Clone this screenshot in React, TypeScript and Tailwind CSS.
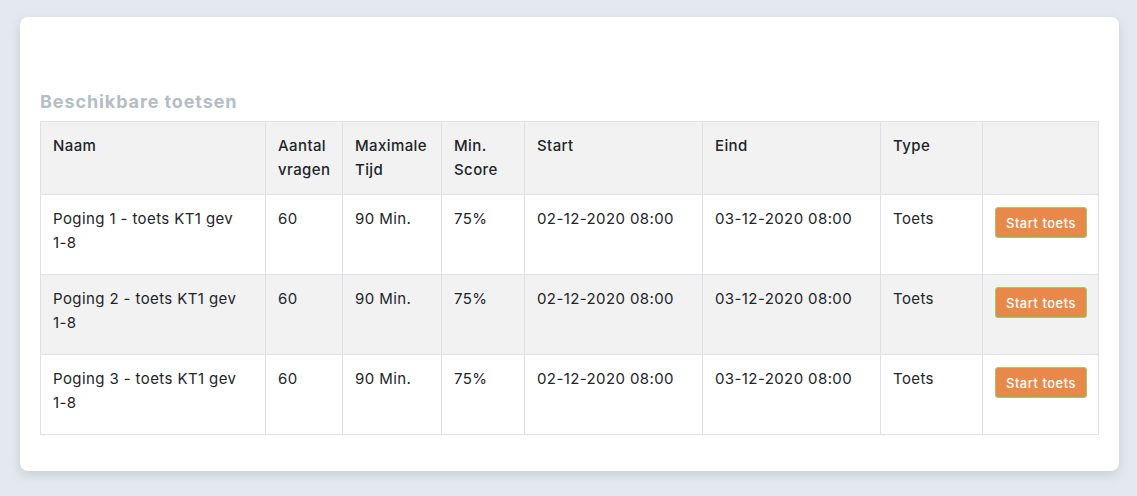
import React from "react";

const rows = [1, 2, 3].map((n) => ({
    name: `Poging ${n} - toets KT1 gev`,
    vragen: "60",
    tijd: "90 Min.",
    score: "75%",
    start: "02-12-2020 08:00",
    eind: "03-12-2020 08:00",
    type: "Toets",
}));

const th = "border border-[#dee2e6] px-3 pt-3 pb-3 text-left align-top font-medium";
const td = "border border-[#dee2e6] px-3 pt-3 align-top h-[80px]";

const App = () => {
    return (
        <div className="min-h-screen bg-[#e4e9f0] pt-[17px] font-['Inter',sans-serif] text-[#212529]">
            <div className="ml-5 mr-[18px] rounded-lg bg-white px-5 pb-9 pt-[72px] shadow-[0_4px_12px_rgba(0,0,0,0.12)]">
                <h2 className="mb-[6px] text-[18px] font-bold leading-[26px] tracking-[0.9px] text-[#b5bdc6]">
                    Beschikbare toetsen
                </h2>
                <table className="w-full table-fixed border-collapse text-[15px] leading-6 tracking-[0.4px]">
                    <thead>
                        <tr className="bg-[#f2f2f2]">
                            <th className={`${th} w-[225px]`}>Naam</th>
                            <th className={`${th} w-[77px]`}>Aantal vragen</th>
                            <th className={`${th} w-[99px]`}>Maximale Tijd</th>
                            <th className={`${th} w-[83px]`}>Min. Score</th>
                            <th className={`${th} w-[178px]`}>Start</th>
                            <th className={`${th} w-[178px]`}>Eind</th>
                            <th className={`${th} w-[102px]`}>Type</th>
                            <th className={th}></th>
                        </tr>
                    </thead>
                    <tbody>
                        {rows.map((row, i) => (
                            <tr key={i} className={i % 2 === 1 ? "bg-[#f2f2f2]" : "bg-white"}>
                                <td className={td}>
                                    {row.name} <span className="whitespace-nowrap">1-8</span>
                                </td>
                                <td className={td}>{row.vragen}</td>
                                <td className={td}>{row.tijd}</td>
                                <td className={td}>{row.score}</td>
                                <td className={td}>{row.start}</td>
                                <td className={td}>{row.eind}</td>
                                <td className={td}>{row.type}</td>
                                <td className={td}>
                                    <button className="h-[31px] w-[92px] rounded-[3px] border border-[#8fd16a] bg-[#e8894a] text-[13px] font-medium tracking-[0.5px] text-white">
                                        Start toets
                                    </button>
                                </td>
                            </tr>
                        ))}
                    </tbody>
                </table>
            </div>
        </div>
    );
};

export default App;
